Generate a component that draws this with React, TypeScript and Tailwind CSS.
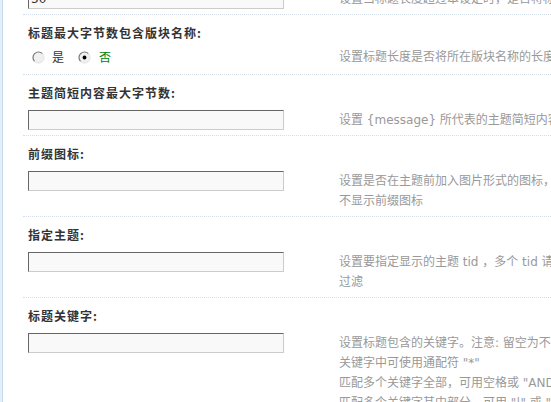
import React from "react";

function Radio({ checked }: { checked?: boolean }) {
  return (
    <svg width="13" height="13" viewBox="0 0 13 13" className="shrink-0">
      <circle cx="6.5" cy="6.5" r="5.5" fill="#f0f0f0" />
      <path d="M2.6 10.4 A5.5 5.5 0 0 1 10.4 2.6" stroke="#777" strokeWidth="1.2" fill="none" />
      <path d="M10.4 2.6 A5.5 5.5 0 0 1 2.6 10.4" stroke="#e2e2e2" strokeWidth="1" fill="none" />
      {checked && <circle cx="6.5" cy="6.5" r="1.9" fill="#000" />}
    </svg>
  );
}

function Input({ value }: { value?: string }) {
  return (
    <div className="w-[256px] h-[20px] border border-t-[#666] border-l-[#666] border-r-[#ccc] border-b-[#ccc] bg-[#f9f9f9] pl-[2px] text-[12px] leading-[18px] text-[#333] font-['DejaVu_Sans','Noto_Sans_CJK_SC',sans-serif]">
      {value}
    </div>
  );
}

function Desc({ lines, lh = "leading-[20px]" }: { lines: string[]; lh?: string }) {
  return (
    <div className={`pl-[5px] whitespace-nowrap text-[12px] ${lh} text-[#999] font-['DejaVu_Sans','Noto_Sans_CJK_SC',sans-serif]`}>
      {lines.map((l, i) => (
        <div key={i}>{l}</div>
      ))}
    </div>
  );
}

function Label({ children }: { children: React.ReactNode }) {
  return (
    <div className="pl-[5px] pt-[9px] h-[27px] leading-[18px] text-[12px] font-bold tracking-[1px] text-[#333] whitespace-nowrap font-['Noto_Sans_CJK_SC',sans-serif]">
      {children}
    </div>
  );
}

function InputRow({ label, lines, value }: { label: string; lines: string[]; value?: string }) {
  return (
    <div className="border-t border-dotted border-[#d3dde7]">
      <Label>{label}</Label>
      <div className="flex pt-[8px] pb-[5px]">
        <div className="w-[311px] shrink-0 pl-[5px]">
          <Input value={value} />
        </div>
        <Desc lines={lines} />
      </div>
    </div>
  );
}

export default function App() {
  return (
    <div className="relative w-[551px] h-[402px] overflow-hidden bg-white flex">
      <div className="w-[3px] shrink-0 bg-[#e3effa] border-r border-[#c5d9ec]" />
      <div className="ml-[20px] flex-1 min-w-0 -mt-[19px]">
        <div className="flex pt-[8px] pb-[5px]">
          <div className="w-[311px] shrink-0 pl-[5px]">
            <Input value="30" />
          </div>
          <Desc lines={["设置当标题长度超过本设定时，是否将标题自动缩短"]} />
        </div>

        <div className="border-t border-dotted border-[#d3dde7]">
          <Label>标题最大字节数包含版块名称:</Label>
          <div className="flex pt-[8px] h-[32px]">
            <div className="w-[311px] shrink-0 pl-[5px] flex items-start leading-[14px] text-[12px] font-['Noto_Sans_CJK_SC',sans-serif]">
              <div className="flex items-center ml-[4px] gap-[7px] text-[#333] h-[14px]">
                <Radio />
                <span>是</span>
              </div>
              <div className="flex items-center ml-[14px] gap-[8px] text-[#008000] h-[14px]">
                <Radio checked />
                <span>否</span>
              </div>
            </div>
            <Desc lh="leading-[14px]" lines={["设置标题长度是否将所在版块名称的长度也计算在内"]} />
          </div>
        </div>

        <InputRow
          label="主题简短内容最大字节数:"
          lines={["设置 {message} 所代表的主题简短内容的最大长度"]}
        />
        <InputRow
          label="前缀图标:"
          lines={["设置是否在主题前加入图片形式的图标，留空则", "不显示前缀图标"]}
        />
        <InputRow
          label="指定主题:"
          lines={["设置要指定显示的主题 tid ，多个 tid 请用半角逗号隔开，留空则不进行", "过滤"]}
        />
        <InputRow
          label="标题关键字:"
          lines={[
            "设置标题包含的关键字。注意: 留空为不进行任何过滤；",
            "关键字中可使用通配符 \"*\"",
            "匹配多个关键字全部，可用空格或 \"AND\" 连接",
            "匹配多个关键字其中部分，可用 \"|\" 或 \"OR\" 连接",
          ]}
        />
      </div>
    </div>
  );
}
